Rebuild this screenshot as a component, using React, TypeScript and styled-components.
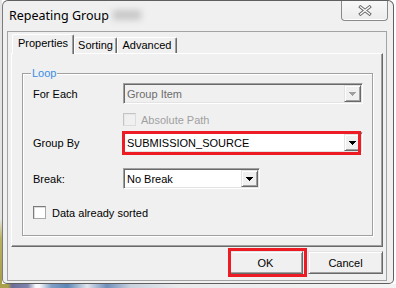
import styled, { createGlobalStyle } from "styled-components";

const GlobalStyle = createGlobalStyle`
  html, body {
    margin: 0;
    padding: 0;
  }
  body {
    width: 396px;
    height: 288px;
    overflow: hidden;
    font-family: "Liberation Sans", Arial, sans-serif;
    font-size: 11px;
    color: #000;
  }
`;

const Desktop = styled.div`
  width: 396px;
  height: 288px;
  box-sizing: border-box;
  padding: 0 2px 4px 2px;
  background:
    linear-gradient(90deg, #a9a14b 0 2%, #6d6c98 3%, #7e84ad 7%, #f6f7fa 9%, #f6f7fa 10%, #7f9fc6 13%, #5b86b5 17%, #dfe4ec 22%, #6f8fbb 27%, #c9d1dd 33%, #e9e9ec 45%, #f4f4f4 100%) bottom / 100% 4px no-repeat,
    linear-gradient(180deg, #e4e4e4 0 76%, #b8b05c 83%, #a59d46 100%) left / 2px 100% no-repeat,
    #ffffff;
`;

const Window = styled.div`
  height: 284px;
  box-sizing: border-box;
  border: 1px solid #5f5f5f;
  border-left-color: #7c7c7c;
  border-radius: 6px 6px 5px 5px;
  background: #f0f0f0;
  display: flex;
  flex-direction: column;
`;

const TitleBar = styled.div`
  height: 30px;
  flex: none;
  display: flex;
  align-items: flex-start;
  padding-left: 6px;
`;

const Title = styled.span`
  margin-top: 7px;
  font-family: "Noto Sans", "Open Sans", sans-serif;
  font-size: 12.5px;
  line-height: 16px;
  color: #000;
`;

const TitleSmudge = styled.span`
  margin: 9px 0 0 4px;
  width: 28px;
  height: 10px;
  background: #c8c8c8;
  filter: blur(3px);
`;

const CloseButton = styled.div`
  margin-left: auto;
  margin-right: 5px;
  width: 47px;
  height: 20px;
  box-sizing: border-box;
  border: 1px solid #8a8a8a;
  border-top: none;
  border-radius: 0 0 4px 4px;
  background: linear-gradient(#f8f8f8, #ececec);
  box-shadow: inset 0 -1px #fff;
  display: flex;
  align-items: center;
  justify-content: center;
`;

const Client = styled.div`
  flex: 1;
  margin: 0 6px 2px 4px;
  border: 1px solid #a3a3a3;
  background: #f0f0f0;
  padding: 2px 3px 0 3px;
  display: flex;
  flex-direction: column;
`;

const TabStrip = styled.div`
  height: 19px;
  display: flex;
  align-items: flex-end;
  padding-left: 1px;
`;

const Tab = styled.div<{ $active?: boolean; $width: number }>`
  position: relative;
  z-index: ${(p) => (p.$active ? 1 : 0)};
  width: ${(p) => p.$width}px;
  height: ${(p) => (p.$active ? 20 : 16)}px;
  margin-bottom: ${(p) => (p.$active ? -1 : 0)}px;
  box-sizing: border-box;
  border-top: 1px solid #fff;
  border-left: 1px solid #fff;
  border-right: 1px solid #696969;
  border-top-left-radius: 2px;
  border-top-right-radius: 2px;
  box-shadow: inset -1px 0 #a0a0a0;
  background: #f0f0f0;
  text-align: center;
  line-height: ${(p) => (p.$active ? 17 : 14)}px;
  white-space: nowrap;
`;

const Panel = styled.div`
  height: 194px;
  flex: none;
  box-sizing: border-box;
  border: 1px solid #696969;
  border-top-color: #fff;
  border-left-color: #fff;
  box-shadow: inset -1px -1px #a0a0a0;
  padding: 19px 0 0 10px;
`;

const GroupBox = styled.div`
  position: relative;
  width: 351px;
  height: 163px;
  box-sizing: border-box;
  border: 1px solid #a0a0a0;
  box-shadow: inset 1px 1px #fff, 1px 1px #fff;
  padding: 9px 0 0 10px;
`;

const Legend = styled.span`
  position: absolute;
  top: -7px;
  left: 8px;
  padding: 0 1px;
  line-height: 13px;
  background: #f0f0f0;
  color: #3a8ee6;
`;

const FormRow = styled.div<{ $top: number }>`
  display: flex;
  align-items: center;
  margin-top: ${(p) => p.$top}px;
`;

const Label = styled.span`
  width: 90px;
  flex: none;
`;

const Indent = styled.span`
  width: 90px;
  flex: none;
`;

const Combo = styled.div<{ $width: number; $disabled?: boolean }>`
  position: relative;
  width: ${(p) => p.$width}px;
  height: 21px;
  box-sizing: border-box;
  border: 1px solid;
  border-color: #a0a0a0 #fff #fff #a0a0a0;
  box-shadow: inset 1px 1px #696969, inset -1px -1px #e3e3e3;
  background: ${(p) => (p.$disabled ? "#f0f0f0" : "#fff")};
  color: ${(p) => (p.$disabled ? "#6d6d6d" : "#000")};
  display: flex;
  align-items: center;
  padding: 1px 1px 1px 3px;
`;

const ComboText = styled.span`
  flex: 1;
  white-space: nowrap;
`;

const DropButton = styled.div`
  width: 17px;
  height: 17px;
  box-sizing: border-box;
  border: 1px solid;
  border-color: #e3e3e3 #696969 #696969 #e3e3e3;
  box-shadow: inset 1px 1px #fff, inset -1px -1px #a0a0a0;
  background: #f0f0f0;
  display: flex;
  align-items: center;
  justify-content: center;
`;

const CheckRow = styled.label<{ $disabled?: boolean; $gap: number }>`
  display: flex;
  align-items: center;
  gap: ${(p) => p.$gap}px;
  color: ${(p) => (p.$disabled ? "#a0a0a0" : "#000")};
`;

const CheckBox = styled.span<{ $disabled?: boolean }>`
  width: 13px;
  height: 13px;
  box-sizing: border-box;
  border: 1px solid;
  border-color: ${(p) =>
    p.$disabled ? "#c4c4c4 #dcdcdc #dcdcdc #c4c4c4" : "#7a7a7a #a8a8a8 #a8a8a8 #7a7a7a"};
  background: ${(p) => (p.$disabled ? "#f0f0f0" : "#fff")};
  box-shadow: inset 1px 1px ${(p) => (p.$disabled ? "#e6e6e6" : "#dcdcdc")};
`;

const ButtonRow = styled.div`
  margin-top: 4px;
  display: flex;
  justify-content: flex-end;
  gap: 5px;
`;

const Button = styled.div`
  position: relative;
  width: 75px;
  height: 23px;
  box-sizing: border-box;
  border: 1px solid;
  border-color: #e3e3e3 #696969 #696969 #e3e3e3;
  box-shadow: inset 1px 1px #fff, inset -1px -1px #a0a0a0;
  background: #f0f0f0;
  display: flex;
  align-items: center;
  justify-content: center;
`;

const Highlight = styled.span<{ $inset: string }>`
  position: absolute;
  inset: ${(p) => p.$inset};
  border: 3px solid #ed1c24;
  pointer-events: none;
`;

function Arrow({ color }: { color: string }) {
  return (
    <svg width="7" height="4" viewBox="0 0 7 4" shapeRendering="crispEdges">
      <polygon points="0,0 7,0 3.5,4" fill={color} />
    </svg>
  );
}

function CloseGlyph() {
  return (
    <svg width="16" height="11" viewBox="0 0 16 11">
      <path d="M3.5 2 L12.5 9 M12.5 2 L3.5 9" stroke="#6a6a6a" strokeWidth="3.2" strokeLinecap="square" />
      <path d="M3.5 2 L12.5 9 M12.5 2 L3.5 9" stroke="#fff" strokeWidth="1.3" strokeLinecap="square" />
    </svg>
  );
}

export default function App() {
  return (
    <Desktop>
      <GlobalStyle />
      <Window>
        <TitleBar>
          <Title>Repeating Group</Title>
          <TitleSmudge />
          <CloseButton>
            <CloseGlyph />
          </CloseButton>
        </TitleBar>
        <Client>
          <TabStrip>
            <Tab $active $width={62}>Properties</Tab>
            <Tab $width={43}>Sorting</Tab>
            <Tab $width={60}>Advanced</Tab>
          </TabStrip>
          <Panel>
            <GroupBox>
              <Legend>Loop</Legend>
              <FormRow $top={0}>
                <Label>For Each</Label>
                <Combo $width={240} $disabled>
                  <ComboText>Group Item</ComboText>
                  <DropButton><Arrow color="#a0a0a0" /></DropButton>
                </Combo>
              </FormRow>
              <FormRow $top={9}>
                <Indent />
                <CheckRow $disabled $gap={5}>
                  <CheckBox $disabled />
                  Absolute Path
                </CheckRow>
              </FormRow>
              <FormRow $top={6}>
                <Label>Group By</Label>
                <Combo $width={240}>
                  <ComboText>SUBMISSION_SOURCE</ComboText>
                  <DropButton><Arrow color="#000" /></DropButton>
                  <Highlight $inset="-2px 1px -3px -2px" />
                </Combo>
              </FormRow>
              <FormRow $top={15}>
                <Label>Break:</Label>
                <Combo $width={137}>
                  <ComboText>No Break</ComboText>
                  <DropButton><Arrow color="#000" /></DropButton>
                </Combo>
              </FormRow>
              <FormRow $top={17}>
                <CheckRow $gap={6}>
                  <CheckBox />
                  Data already sorted
                </CheckRow>
              </FormRow>
            </GroupBox>
          </Panel>
          <ButtonRow>
            <Button>
              OK
              <Highlight $inset="-4px -5px -4px -1px" />
            </Button>
            <Button>Cancel</Button>
          </ButtonRow>
        </Client>
      </Window>
    </Desktop>
  );
}
